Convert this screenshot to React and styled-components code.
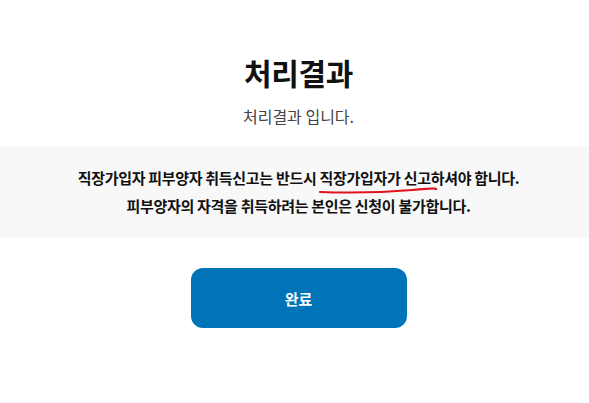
import React from 'react'
import styled, { createGlobalStyle } from 'styled-components'

const GlobalStyle = createGlobalStyle`
    body {
        margin:0;
        background:#fff;
        font-family:"Noto Sans CJK KR", "Noto Sans", sans-serif;
    }
`

const Page = styled.div`
    overflow:hidden;
`

const Column = styled.div`
    width:597px;
    display:flex;
    flex-direction:column;
    align-items:center;
    padding-top:52px;
`

const Title = styled.h1`
    margin:0;
    font-size:30px;
    line-height:40px;
    font-weight:700;
    color:#111;
    letter-spacing:-0.3px;
`

const Sub = styled.p`
    margin:12px 0 0;
    font-size:16px;
    line-height:24px;
    color:#444;
    letter-spacing:0;
`

const Notice = styled.div`
    align-self:stretch;
    margin-top:18px;
    padding:18px 0;
    background:#f8f8f8;
    text-align:center;
    font-size:15px;
    line-height:28px;
    font-weight:700;
    color:#111;
    letter-spacing:-0.3px;
`

const Marked = styled.span`
    position:relative;
    display:inline-block;
`

const Scribble = styled.svg`
    position:absolute;
    left:-1px;
    bottom:-2px;
    width:calc(100% + 7px);
    height:8px;
    overflow:visible;
`

const Done = styled.button`
    margin-top:30px;
    width:216px;
    height:60px;
    border:none;
    border-radius:12px;
    background:#0073b9;
    color:#fff;
    font-family:inherit;
    font-size:15px;
    font-weight:700;
    cursor:pointer;
`

const App = () => {
    return (
        <>
            <GlobalStyle />
            <Page>
                <Column>
                    <Title>처리결과</Title>
                    <Sub>처리결과 입니다.</Sub>
                    <Notice>
                        직장가입자 피부양자 취득신고는 반드시{' '}
                        <Marked>
                            직장가입자가 신고
                            <Scribble viewBox="0 0 120 8" preserveAspectRatio="none">
                                <path d="M1 6 C 30 7, 70 6, 95 4 S 115 2, 119 3" fill="none" stroke="#e0141e" strokeWidth="2.2" strokeLinecap="round" />
                            </Scribble>
                        </Marked>
                        하셔야 합니다.
                        <br />
                        피부양자의 자격을 취득하려는 본인은 신청이 불가합니다.
                    </Notice>
                    <Done>완료</Done>
                </Column>
            </Page>
        </>
    )
}

export default App
